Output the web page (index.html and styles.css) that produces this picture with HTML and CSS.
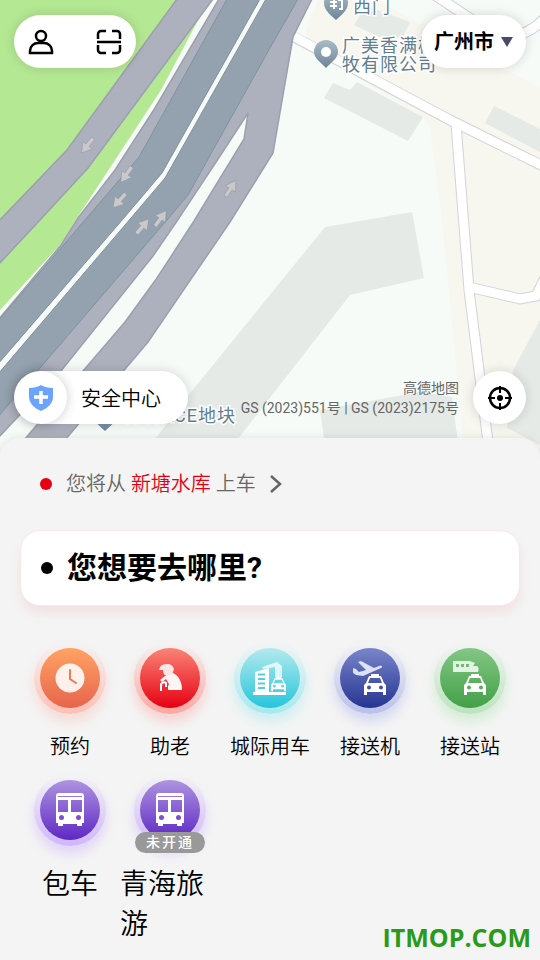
FILE: index.html
```
<!DOCTYPE html>
<html lang="zh-CN">

<head>
  <meta charset="UTF-8">
  <meta name="viewport" content="width=device-width, initial-scale=1.0">
  <title>叫车</title>
  <link rel="stylesheet" href="styles.css">
</head>

<body>
  <!-- Shared icon shapes -->
  <svg class="defs" width="0" height="0" aria-hidden="true">
    <defs>
      <linearGradient id="pin-fill" x1="0" y1="0" x2="0" y2="1">
        <stop offset="0" stop-color="#a9bcc8" />
        <stop offset="1" stop-color="#6e8498" />
      </linearGradient>
      <symbol id="car" viewBox="0 0 22 22">
        <path fill="currentColor" fill-rule="evenodd" d="M7 0h8v2h2l3 7 2 2v10h-3v-3H3v3H0V11l2-2 3-7h2zM6 4 4 9h14l-2-5zM5 11.500a2 2 0 1 0 0 4 2 2 0 0 0 0-4zM17 11.500a2 2 0 1 0 0 4 2 2 0 0 0 0-4z" />
      </symbol>
      <symbol id="bus" viewBox="0 0 28 34">
        <path fill="currentColor" fill-rule="evenodd" d="M3 0h22a3 3 0 0 1 3 3v27h-2v3h-5v-2H7v2H2v-3H0V3a3 3 0 0 1 3-3zM2 3v1h24V3zM2 7v12h10V7zM15 7v12h11V7zM5.500 22a2.500 2.500 0 1 0 0 5 2.500 2.500 0 0 0 0-5zM22.500 22a2.500 2.500 0 1 0 0 5 2.500 2.500 0 0 0 0-5z" />
      </symbol>
      <path id="direction" d="M0-9 6 1H2v9h-4V1h-4z" />
    </defs>
  </svg>

  <main class="app">
    <section class="map" aria-label="地图">
      <svg class="map-canvas" viewBox="0 0 540 458" preserveAspectRatio="xMidYMax slice">
        <!-- Ground -->
        <rect width="540" height="458" fill="#f6fbf8" />
        <path class="land" d="M318 0h58l164 88v370h-75L442 220l-12-92-7-11L303 45l8-30z" />
        <path class="park" d="M0 0h212l-10 13-41 77-84 128-17 27-60 65z" />

        <!-- Buildings -->
        <g class="building">
          <path d="m333 83 17 7 7-8 66 35-15 24-84-43z" />
          <path d="m494 106 46 23v23l-55-29z" />
          <path d="m366 6 44 16-7 15-15 4-34-16z" />
          <path d="m325 227 87-15 12 66-74 17-127 163h-82l46-61z" />
          <path d="m320 410 100-18 32 5 8 61H327z" />
          <path d="m540 320-27 50-6 58 33 17z" />
        </g>

        <!-- Side streets -->
        <g class="street-edge">
          <path d="m430-8 58 38q30 16 57-12" />
          <path d="m292 36 158 84 95 47" />
          <path d="m456 124 13 166 21 168" />
          <path d="m469 287 51 12 16-3 10-20" />
        </g>
        <g class="street">
          <path d="m430-8 58 38q30 16 57-12" />
          <path d="m291 35 159 85 95 47" />
          <path d="m456 124 13 166 21 168" />
          <path d="m469 287 51 12 16-3 10-20" />
        </g>

        <!-- Highway -->
        <path class="ramp" d="M177-1 67 150-2 222v43l42-45 48-52L213-1z" />
        <path class="ramp" fill-rule="evenodd" d="m219-1-64 109-40 62-37 48-17 27-63 75v118L61 371l92-115 24-35 45-68 26-40-4 26-50 82-37 57-32 44-42 49-59 69h41l83-98 82-120 43-69 20-116L312-1z" />
        <path fill="#f6fbf8" d="M260-1 162 173l-39 46L-2 364v10l133-155 34-40L267-1z" />
        <path class="highway" d="m227-1-88 158-54 63L-2 321v43l125-145 39-46L260-1z" />
        <path class="highway" d="m266-1-101 179-34 40L-2 374v43l169-197 21-25 82-147 28-49z" />

        <g class="arrows">
          <use href="#direction" transform="translate(87 146) rotate(218)" />
          <use href="#direction" transform="translate(126 175) rotate(215)" />
          <use href="#direction" transform="translate(119 201) rotate(222)" />
          <use href="#direction" transform="translate(143 226) rotate(40)" />
          <use href="#direction" transform="translate(161 218) rotate(36)" />
          <use href="#direction" transform="translate(231 188) rotate(33)" />
        </g>

        <!-- Places -->
        <g fill="url(#pin-fill)">
          <path d="M336 20c-4-4-12-9-12-17a12 12 0 0 1 24 0c0 8-8 13-12 17z" />
          <path d="M326 68c-4-5-12-9-12-16a12 12 0 0 1 24 0c0 7-8 11-12 16z" />
          <path d="M105 431c-4-4-12-9-12-17a12 12 0 0 1 24 0c0 8-8 13-12 17z" />
        </g>
        <path fill="none" stroke="#fff" stroke-width="2" d="M330 2h7M330 6h7M334-1v10M338 0h4v9h-3" />
        <circle cx="326" cy="52" r="5" fill="#fff" />
        <g class="place">
          <text x="353" y="13">西门</text>
          <text x="342" y="52">广美香满楼畜</text>
          <text x="342" y="71">牧有限公司</text>
          <text x="236" y="422" text-anchor="end">保利ACE地块</text>
        </g>
      </svg>

      <div class="map-row">
        <nav class="pill tools">
          <button class="icon-button" type="button" aria-label="个人中心">
            <svg width="26" height="26" viewBox="0 0 26 26">
              <circle cx="13" cy="7" r="5" />
              <path d="M2 24v-2c0-5 4-8 8-8h6c4 0 8 3 8 8v2z" />
            </svg>
          </button>
          <button class="icon-button" type="button" aria-label="扫一扫">
            <svg width="26" height="26" viewBox="0 0 26 26">
              <path d="M2 10V5a3 3 0 0 1 3-3h5M16 2h5a3 3 0 0 1 3 3v5M2 16v5a3 3 0 0 0 3 3h5M16 24h5a3 3 0 0 0 3-3v-5M1 13h24" />
            </svg>
          </button>
        </nav>

        <label class="pill city">
          <select class="city-select" aria-label="城市">
            <option>广州市</option>
          </select>
          <svg width="12" height="10" viewBox="0 0 12 10">
            <path d="M0 0h12L6 10z" fill="#474b68" />
          </svg>
        </label>
      </div>

      <div class="map-row">
        <button class="pill safety" type="button">
          <span class="safety-icon">
            <svg width="24" height="26" viewBox="0 0 24 26">
              <path d="M12 0c3 2 7 3 12 3v9c0 6-5 11-12 14C5 23 0 18 0 12V3c5 0 9-1 12-3z" fill="#6ba4ff" />
              <path d="M12 6v13M5 12h14" stroke="#fff" stroke-width="3.500" />
            </svg>
          </span>
          安全中心
        </button>
        <p class="credit">高德地图<br>GS (2023)551号 | GS (2023)2175号</p>
        <button class="pill locate" type="button" aria-label="定位">
          <svg width="24" height="24" viewBox="0 0 24 24" fill="none" stroke="#000">
            <circle cx="12" cy="12" r="10" stroke-width="2.500" />
            <path d="M12 0v7M12 17v7M0 12h7M17 12h7" stroke-width="2" />
            <circle cx="12" cy="12" r="3" fill="#000" stroke="none" />
          </svg>
        </button>
      </div>
    </section>

    <section class="sheet">
      <button class="pickup" type="button">
        <span class="dot dot-red"></span>
        <span>您将从 <span class="pickup-place">新塘水库</span> 上车</span>
        <svg width="13" height="20" viewBox="0 0 13 20">
          <path d="m1 2 9 8-9 8" fill="none" stroke="#666" stroke-width="2.500" />
        </svg>
      </button>

      <button class="search" type="button">
        <span class="dot"></span>
        您想要去哪里?
      </button>

      <div class="services">
        <a class="service" href="#">
          <span class="disc orange">
            <svg width="30" height="30" viewBox="0 0 30 30">
              <circle cx="15" cy="15" r="14.500" fill="#fff" opacity=".88" />
              <path d="M15 7v9l6 4" fill="none" stroke="#ee7a52" stroke-width="2" stroke-linecap="round" />
            </svg>
          </span>
          <span class="label">预约</span>
        </a>
        <a class="service" href="#">
          <span class="disc red">
            <svg width="30" height="30" viewBox="0 0 30 30" fill="#fff">
              <path d="M5 4c1-2 4-3 7-3 4 0 6 2 7 5l-1 3c0 2-3 4-5 4-3 0-5-2-5-6H4z" opacity=".85" />
              <path d="M18 10c6 3 9 9 9 17H13v-4l1-2-3-5-4 3-2-2 5-4c3 0 6-1 8-3z" opacity=".95" />
              <path d="M6 28v-7q3-3 5-1v4" fill="none" stroke="#fff" stroke-width="2" />
            </svg>
          </span>
          <span class="label">助老</span>
        </a>
        <a class="service" href="#">
          <span class="disc cyan">
            <svg width="34" height="36" viewBox="0 0 34 36">
              <path d="m9 7 15-5 5 4v11h-7V7l-12 2z" fill="#fff" opacity=".75" />
              <path d="m2 12 14-4v25H2z" fill="#fff" />
              <path d="M5 14.500h7M5 19h7M5 23.500h7M5 28h7" stroke="#56cfdd" stroke-width="2" />
              <path d="M0 33.500h33" stroke="#fff" stroke-width="3" />
              <svg x="18" y="17" width="15" height="15" viewBox="0 0 22 22"><use href="#car" width="22" height="22" /></svg>
            </svg>
          </span>
          <span class="label">城际用车</span>
        </a>
        <a class="service" href="#">
          <span class="disc blue">
            <svg width="34" height="36" viewBox="0 0 34 36">
              <path d="m0 8 3 1 3 3 7-2L5 2l3-1 13 7 5-2c3-1 4 1 2 2l-9 4-9 4-7-1-4-3z" fill="#dde1f5" />
              <use href="#car" x="11" y="14" width="22" height="22" />
            </svg>
          </span>
          <span class="label">接送机</span>
        </a>
        <a class="service" href="#">
          <span class="disc green">
            <svg width="34" height="36" viewBox="0 0 34 36">
              <path fill="#e4f3e5" fill-rule="evenodd" d="M0 1h17l5 2-2 3h4c2 1 2 4 1 6H0zM3 4v3h3V4zM8 4v3h3V4zM13 4v3h3V4z" />
              <use href="#car" x="11" y="14" width="22" height="22" />
            </svg>
          </span>
          <span class="label">接送站</span>
        </a>
        <a class="service" href="#">
          <span class="disc purple">
            <svg width="28" height="34"><use href="#bus" /></svg>
          </span>
          <span class="label label-large">包车</span>
        </a>
        <a class="service" href="#">
          <span class="disc purple">
            <svg width="28" height="34"><use href="#bus" /></svg>
            <span class="badge">未开通</span>
          </span>
          <span class="label label-large">青海旅游</span>
        </a>
      </div>

      <span class="site-mark">ITMOP.COM</span>
    </section>
  </main>
</body>

</html>
```

FILE: styles.css
```
* {
  box-sizing: border-box;
  margin: 0;
  padding: 0;
}

body {
  font-family: Roboto, 'Noto Sans CJK SC', sans-serif;
  font-size: 20px;
  color: #000;
  background-color: #f4f4f4;
}

button,
select {
  font: inherit;
  color: inherit;
  border: none;
  background: none;
  cursor: pointer;
}

svg {
  flex: none;
}

.defs {
  position: absolute;
}

.app {
  min-height: 100vh;
  display: flex;
  flex-direction: column;
}

/* Map */
.map {
  position: relative;
  flex: 1;
  min-height: 360px;
  display: flex;
  flex-direction: column;
  justify-content: space-between;
  padding: 15px 14px 34px;
  overflow: hidden;
}

.map-canvas {
  position: absolute;
  inset: 0;
  width: 100%;
  height: 100%;
}

.land {
  fill: #f7f6ef;
}

.park {
  fill: #b5e893;
}

.building {
  fill: #e5eae7;
}

.street,
.street-edge {
  fill: none;
  stroke: #fff;
  stroke-width: 9;
}

.street-edge {
  stroke: #d2d4da;
  stroke-width: 11;
}

.ramp {
  fill: #adb1bd;
  stroke: #9ba0ae;
  stroke-width: 1.5;
}

.highway {
  fill: #93a2ae;
  stroke: #82929e;
}

.arrows {
  fill: #c9c9cc;
  stroke: #8f959d;
  stroke-width: 0.5;
}

.place {
  font-size: 18px;
  letter-spacing: 1px;
  fill: #5f7e90;
  stroke: #fff;
  stroke-width: 3;
  paint-order: stroke;
}

.map-row {
  position: relative;
  display: flex;
  align-items: center;
  justify-content: space-between;
}

.pill {
  display: flex;
  align-items: center;
  height: 53px;
  border-radius: 27px;
  background-color: #fff;
  box-shadow: 0 0 12px rgba(0, 0, 0, 0.15);
}

.tools {
  gap: 42px;
  padding: 0 14px;
}

.icon-button {
  display: flex;
}

.icon-button svg {
  fill: none;
  stroke: #000;
  stroke-width: 2.5;
}

.city {
  gap: 7px;
  padding: 0 13px;
  font-weight: 700;
}

.city-select {
  appearance: none;
  outline: none;
}

.safety {
  gap: 14px;
  padding-right: 27px;
  font-weight: 350;
}

.safety-icon {
  display: flex;
  align-items: center;
  justify-content: center;
  width: 53px;
  height: 53px;
  border-radius: 50%;
  box-shadow: 0 0 12px rgba(0, 0, 0, 0.2);
}

.credit {
  flex: 1;
  padding-right: 14px;
  font-size: 14px;
  line-height: 20px;
  text-align: right;
  color: #666;
}

.locate {
  width: 53px;
  justify-content: center;
}

/* Bottom sheet */
.sheet {
  position: relative;
  display: flex;
  flex-direction: column;
  margin-top: -20px;
  padding: 30px 20px 15px;
  border-radius: 20px 20px 0 0;
  background-color: #f4f4f4;
  box-shadow: 0 0 8px rgba(0, 0, 0, 0.1);
}

.pickup {
  align-self: flex-start;
  display: flex;
  align-items: center;
  gap: 14px;
  padding-left: 20px;
  font-weight: 350;
  line-height: 32px;
  color: #666;
}

.pickup-place {
  color: #e60012;
}

.dot {
  width: 12px;
  height: 12px;
  border-radius: 50%;
  background-color: #000;
}

.dot-red {
  background-color: #e60012;
}

.search {
  display: flex;
  align-items: center;
  gap: 14px;
  margin-top: 30px;
  padding: 14px 20px;
  border: 1px solid #ffe6e6;
  border-radius: 20px;
  background-color: #fff;
  box-shadow: 0 8px 12px rgba(230, 0, 18, 0.07);
  font-size: 30px;
  font-weight: 700;
  line-height: 46px;
}

.services {
  display: grid;
  grid-template-columns: repeat(5, 1fr);
  gap: 19px 0;
  margin-top: 42px;
}

.service {
  display: flex;
  flex-direction: column;
  align-items: center;
  gap: 25px;
  color: inherit;
  text-decoration: none;
}

.disc {
  position: relative;
  z-index: 0;
  display: flex;
  align-items: center;
  justify-content: center;
  width: 60px;
  height: 60px;
  color: #fff;
}

/* Soft ring behind the coloured circle */
.disc::before {
  content: '';
  position: absolute;
  z-index: -1;
  inset: -6px;
  border-radius: 50%;
  background: linear-gradient(transparent, var(--halo));
  box-shadow: 0 8px 12px var(--glow);
}

.disc::after {
  content: '';
  position: absolute;
  z-index: -1;
  inset: 0;
  border-radius: 50%;
  background: linear-gradient(var(--from), var(--to));
}

.orange {
  --from: #ffa364;
  --to: #e7644c;
  --halo: #ffbfb3;
  --glow: rgba(255, 130, 100, 0.2);
}

.red {
  --from: #fa8477;
  --to: #e60012;
  --halo: #ffa6a0;
  --glow: rgba(255, 80, 70, 0.2);
}

.cyan {
  --from: #b4eaee;
  --to: #26c5da;
  --halo: #a5e9ee;
  --glow: rgba(60, 220, 235, 0.2);
}

.blue {
  --from: #7985ca;
  --to: #263592;
  --halo: #b9c0ea;
  --glow: rgba(90, 105, 230, 0.2);
}

.green {
  --from: #83c785;
  --to: #43a047;
  --halo: #bbe3bd;
  --glow: rgba(90, 210, 95, 0.2);
}

.purple {
  --from: #ae94e0;
  --to: #5d28c4;
  --halo: #cfb5ff;
  --glow: rgba(150, 90, 255, 0.2);
}

.label {
  font-weight: 350;
  line-height: 28px;
}

.label-large {
  font-size: 28px;
  line-height: 40px;
}

.badge {
  position: absolute;
  top: 52px;
  left: -5px;
  width: 70px;
  border-radius: 11px;
  background-color: #999;
  font-size: 14px;
  font-weight: 500;
  line-height: 21px;
  letter-spacing: 2px;
  text-align: center;
}

.site-mark {
  position: absolute;
  right: 9px;
  bottom: 6px;
  font-family: 'Open Sans', sans-serif;
  font-size: 25px;
  font-weight: 700;
  line-height: 34px;
  color: #2a9a18;
}
```
